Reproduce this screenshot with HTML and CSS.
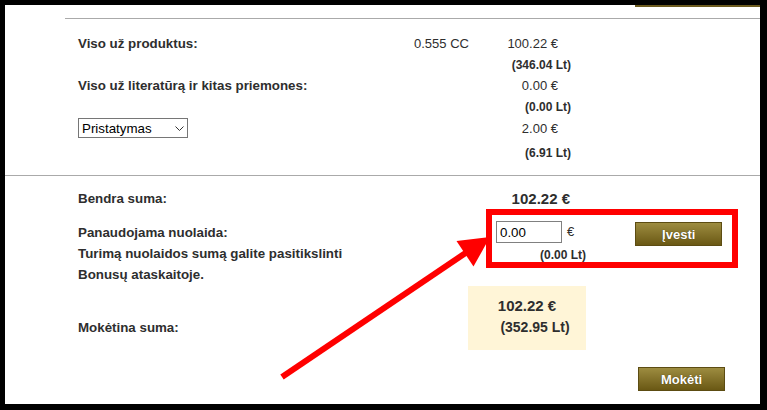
FILE: index.html
```html
<!DOCTYPE html>
<html lang="lt">
<head>
  <meta charset="UTF-8">
  <title>Užsakymo suma</title>
  <link rel="stylesheet" href="styles.css">
</head>
<body>
  <div class="frame">
    <div class="topbar"><div class="gold"></div></div>

    <!-- Prekių sumos -->
    <div class="summary">
      <div class="row">
        <div class="label">Viso už produktus:</div>
        <div class="cc">0.555 CC</div>
        <div class="val eur">100.22 €</div>
      </div>
      <div class="row">
        <div class="label"></div>
        <div class="cc"></div>
        <div class="val lt">(346.04 Lt)</div>
      </div>
      <div class="row">
        <div class="label">Viso už literatūrą ir kitas priemones:</div>
        <div class="cc"></div>
        <div class="val eur">0.00 €</div>
      </div>
      <div class="row">
        <div class="label"></div>
        <div class="cc"></div>
        <div class="val lt">(0.00 Lt)</div>
      </div>
      <div class="row row-select">
        <div class="label">
          <div class="select-wrap">
            <select class="delivery">
              <option>Pristatymas</option>
            </select>
            <svg class="chevron" width="9" height="5" viewBox="0 0 9 5"><path d="M0.5 0.5 L4.5 4.5 L8.5 0.5" fill="none" stroke="#333" stroke-width="1"/></svg>
          </div>
        </div>
        <div class="cc"></div>
        <div class="val eur">2.00 €</div>
      </div>
      <div class="row row-last">
        <div class="label"></div>
        <div class="cc"></div>
        <div class="val lt">(6.91 Lt)</div>
      </div>
    </div>

    <!-- Bendra suma ir nuolaida -->
    <div class="totals">
      <div class="row">
        <div class="label">Bendra suma:</div>
        <div class="cc"></div>
        <div class="val total">102.22 €</div>
      </div>

      <div class="discount">
        <div class="disc-label">
          Panaudojama nuolaida:<br>
          Turimą nuolaidos sumą galite pasitikslinti<br>
          Bonusų ataskaitoje.
        </div>
        <div class="disc-ctrl">
          <div class="disc-top">
            <input type="text" class="disc-input" value="0.00">
            <span class="disc-eur">€</span>
            <button class="btn btn-enter">Įvesti</button>
          </div>
          <div class="disc-lt">(0.00 Lt)</div>
        </div>
      </div>

      <div class="pay-row">
        <div class="pay-label">Mokėtina suma:</div>
        <div class="pay-box">
          <div class="pay-eur">102.22 €</div>
          <div class="pay-lt">(352.95 Lt)</div>
        </div>
      </div>

      <div class="submit-row">
        <button class="btn btn-pay">Mokėti</button>
      </div>
    </div>

    <!-- Žymėjimas ant ekrano kopijos -->
    <div class="highlight"></div>
    <svg class="arrow" width="755" height="399" viewBox="0 0 755 399">
      <line x1="277" y1="372" x2="462" y2="247" stroke="#ff0000" stroke-width="6"/>
      <polygon points="485,232 451.5,236 468.5,261.5" fill="#ff0000"/>
    </svg>
  </div>
</body>
</html>
```

FILE: styles.css
```css
/* Base */
* {
  margin: 0;
  padding: 0;
  box-sizing: border-box;
}
body {
  background: #000;
  height: 410px;
  overflow: hidden;
  font-family: "Liberation Sans", Arial, sans-serif;
  font-size: 13px;
  color: #2e2e2e;
}
.frame {
  position: relative;
  margin: 5px 7px 0 5px;
  height: 399px;
  background: #fff;
  overflow: hidden;
}
.topbar {
  height: 13px;
  display: flex;
  justify-content: flex-end;
}
.gold {
  width: 125px;
  height: 2px;
  background: #6b5a1e;
}

/* Rows */
.summary {
  margin-left: 60px;
  border-top: 1px solid #aaa;
  padding: 14px 0 0 13px;
}
.row {
  display: flex;
  align-items: center;
  height: 21px;
  white-space: nowrap;
}
.label {
  width: 336px;
  font-size: 13.33px;
  font-weight: bold;
}
.cc {
  width: 80px;
}
.val {
  width: 77px;
  text-align: right;
}
.val.eur {
  padding-right: 13px;
}
.val.lt {
  font-size: 12px;
  font-weight: bold;
}
.val.total {
  font-size: 15px;
  font-weight: bold;
  padding-right: 1px;
}
.row-select {
  height: 20px;
  margin-top: 1px;
}
.row-last {
  margin-top: 4px;
}
.summary .row-last {
  margin-bottom: 12px;
}

/* Select */
.select-wrap {
  position: relative;
  width: 110px;
  height: 20px;
}
.delivery {
  appearance: none;
  -webkit-appearance: none;
  width: 110px;
  height: 20px;
  border: 1px solid #767676;
  border-radius: 0;
  background: #fff;
  padding: 0 0 0 3px;
  font-family: "Liberation Sans", Arial, sans-serif;
  font-size: 13.33px;
  color: #000;
  outline: none;
}
.chevron {
  position: absolute;
  top: 8px;
  left: 97px;
  pointer-events: none;
}

/* Totals */
.totals {
  border-top: 1px solid #aaa;
  padding: 12px 0 0 73px;
}
.discount {
  display: flex;
  margin-top: 13px;
}
.disc-label {
  width: 418px;
  font-size: 13.33px;
  font-weight: bold;
  line-height: 21px;
}
.disc-ctrl {
  margin-top: -1px;
}
.disc-top {
  display: flex;
  align-items: flex-start;
  height: 25px;
}
.disc-input {
  width: 66px;
  height: 22px;
  border: 1px solid #808080;
  padding: 0 3px;
  font-family: "Liberation Sans", Arial, sans-serif;
  font-size: 13.33px;
  color: #000;
  outline: none;
}
.disc-eur {
  margin-left: 5px;
  line-height: 22px;
}
.disc-lt {
  padding-left: 44px;
  font-size: 12px;
  font-weight: bold;
  line-height: 18px;
}

/* Buttons */
.btn {
  width: 87px;
  height: 24px;
  border: 1px solid #5c4c12;
  background: linear-gradient(#9d8c40, #6a5814);
  color: #fff;
  font-family: "Liberation Sans", Arial, sans-serif;
  font-size: 13px;
  font-weight: bold;
  text-shadow: 0 0 1px #3a2f08;
  cursor: pointer;
}
.btn-enter {
  margin-left: 61px;
  margin-top: 1px;
}

/* Mokėtina suma */
.pay-row {
  display: flex;
  margin-top: 1px;
}
.pay-label {
  width: 390px;
  align-self: flex-end;
  margin-bottom: 11px;
  font-size: 13.33px;
  font-weight: bold;
  line-height: 23px;
}
.pay-box {
  width: 118px;
  height: 64px;
  background: #fff5d7;
  padding-top: 9px;
  text-align: center;
  font-weight: bold;
}
.pay-eur {
  font-size: 15px;
  line-height: 21px;
}
.pay-lt {
  font-size: 14px;
  line-height: 23px;
  padding-left: 16px;
}
.submit-row {
  margin-top: 17px;
  padding-left: 560px;
}

/* Annotation */
.highlight {
  position: absolute;
  left: 481px;
  top: 204px;
  width: 252px;
  height: 59px;
  border: 6px solid #ff0000;
}
.arrow {
  position: absolute;
  left: 0;
  top: 0;
  pointer-events: none;
}
```
